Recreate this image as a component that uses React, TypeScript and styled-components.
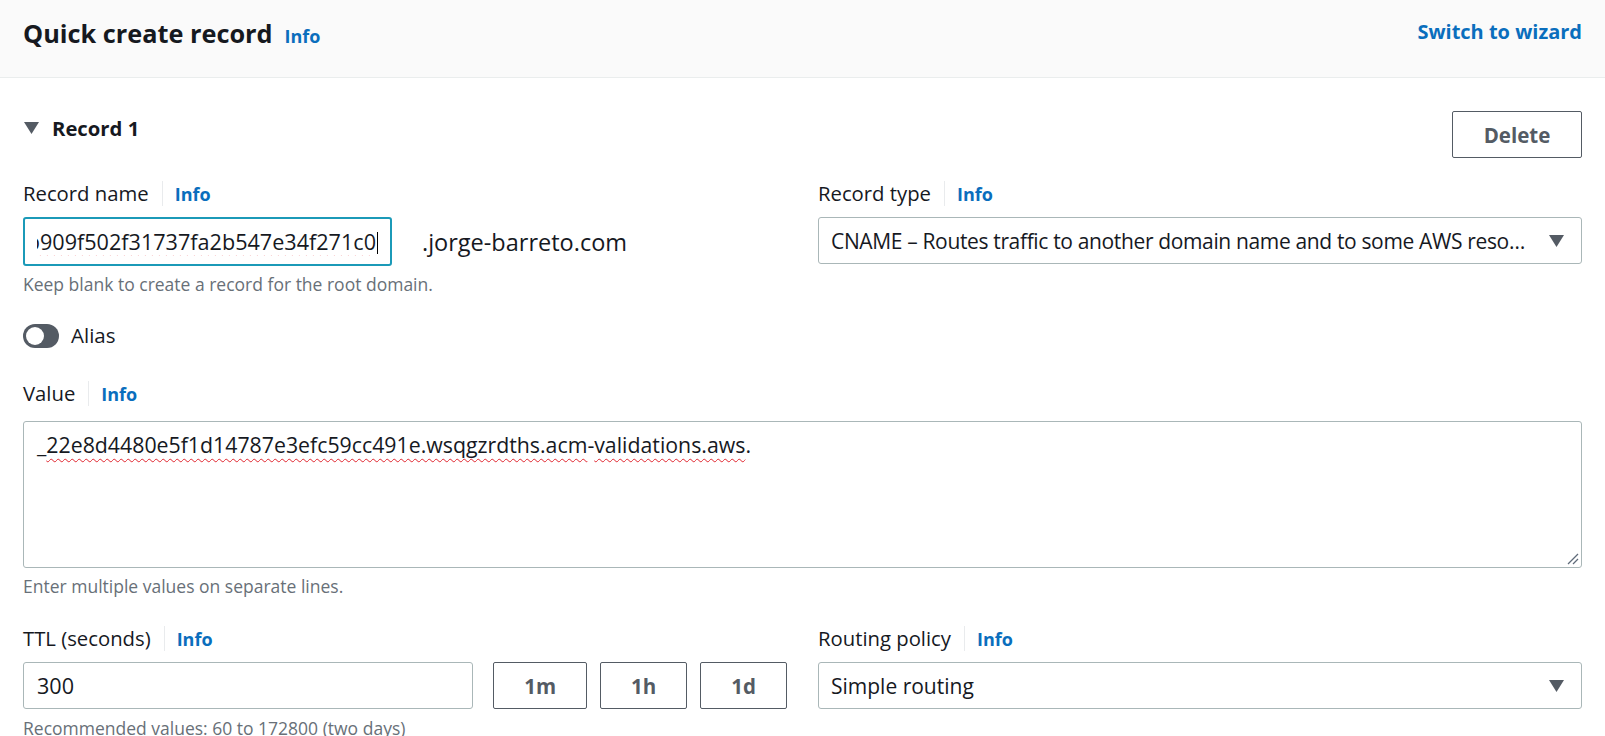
import React from "react";
import styled, { createGlobalStyle } from "styled-components";

const GlobalStyle = createGlobalStyle`
  html, body {
    margin: 0;
    padding: 0;
    overflow: hidden;
    background: #ffffff;
  }
  body {
    font-family: "Open Sans", "Noto Sans", Arial, sans-serif;
    color: #16191f;
  }
  *, *::before, *::after {
    box-sizing: border-box;
  }
`;

const LINK = "#0a6ebd";
const TEXT = "#16191f";
const MUTED = "#687078";
const BORDER = "#aab7b8";
const DARK = "#545b64";

const Page = styled.div`
  width: 1605px;
  min-height: 736px;
  background: #ffffff;
`;

const Header = styled.header`
  display: flex;
  justify-content: space-between;
  align-items: flex-start;
  height: 78px;
  padding: 16px 23px 0 23px;
  background: #fafafa;
  border-bottom: 1px solid #eaeded;
`;

const TitleGroup = styled.div`
  display: flex;
  align-items: baseline;
  gap: 12px;
`;

const Title = styled.h2`
  margin: 0;
  font-size: 25.3px;
  font-weight: 700;
  line-height: 34px;
  color: ${TEXT};
`;

const InfoLink = styled.a`
  font-size: 18px;
  line-height: 24px;
  font-weight: 700;
  color: ${LINK};
  text-decoration: none;
  cursor: pointer;
`;

const HeaderLink = styled.a`
  margin-top: 2px;
  font-size: 20px;
  line-height: 28px;
  font-weight: 700;
  color: ${LINK};
  text-decoration: none;
  cursor: pointer;
`;

const Body = styled.main`
  padding: 33px 23px 40px 23px;
`;

const RecordHeader = styled.div`
  display: flex;
  justify-content: space-between;
  align-items: flex-start;
`;

const Expander = styled.div`
  display: flex;
  align-items: center;
  gap: 13px;
  margin-top: 4px;
  padding-left: 1px;
  font-size: 20.3px;
  line-height: 26px;
  font-weight: 700;
  color: ${TEXT};
`;

const OutlineButton = styled.button<{ $width?: number }>`
  flex: none;
  ${(p) => (p.$width ? `width: ${p.$width}px;` : "padding: 0 30px;")}
  height: 47px;
  border: 1px solid ${DARK};
  border-radius: 2px;
  background: #ffffff;
  color: ${DARK};
  font-family: inherit;
  font-size: 20.5px;
  font-weight: 700;
  cursor: pointer;
`;

const FieldGrid = styled.div<{ $top: number }>`
  display: grid;
  grid-template-columns: 1fr 1fr;
  column-gap: 31px;
  margin-top: ${(p) => p.$top}px;
`;

const Field = styled.div<{ $top?: number }>`
  display: flex;
  flex-direction: column;
  min-width: 0;
  margin-top: ${(p) => p.$top ?? 0}px;
`;

const LabelRow = styled.div`
  display: flex;
  align-items: center;
  height: 25px;
`;

const Label = styled.label`
  font-size: 20.3px;
  line-height: 25px;
  color: ${TEXT};
`;

const LabelDivider = styled.span`
  width: 1px;
  height: 25px;
  background: #e9ebed;
  margin: 0 12px 0 13px;
`;

const ControlRow = styled.div`
  display: flex;
  align-items: center;
  margin-top: 11px;
`;

const TextInput = styled.div<{ $focused?: boolean; $width?: number }>`
  display: flex;
  align-items: center;
  ${(p) => (p.$width ? `width: ${p.$width}px; flex: none;` : "flex: 1; min-width: 0;")}
  height: ${(p) => (p.$focused ? 49 : 47)}px;
  padding: 0 ${(p) => (p.$focused ? 12 : 13)}px;
  border: ${(p) => (p.$focused ? "2px solid #1b9ab8" : `1px solid ${BORDER}`)};
  border-radius: 3px;
  background: #ffffff;
  font-size: 21.6px;
  color: ${TEXT};
`;

const InputViewport = styled.div`
  flex: 1;
  min-width: 0;
  display: flex;
  justify-content: flex-end;
  overflow: hidden;
`;

const InputValue = styled.span`
  flex: none;
  white-space: nowrap;
  line-height: 28px;
`;

const TextCursor = styled.span`
  display: inline-block;
  width: 1px;
  height: 22px;
  margin-left: 1px;
  background: #000000;
  vertical-align: -4px;
`;

const Misspelled = styled.span`
  text-decoration: underline wavy #e0262f;
  text-decoration-thickness: 1px;
  text-underline-offset: 5px;
  text-decoration-skip-ink: none;
`;

const DomainSuffix = styled.span`
  margin-left: 30px;
  font-size: 23.5px;
  color: ${TEXT};
`;

const Helper = styled.div<{ $top?: number }>`
  margin-top: ${(p) => p.$top ?? 7}px;
  font-size: 17.5px;
  line-height: 22px;
  color: ${MUTED};
  white-space: nowrap;
`;

const SelectBox = styled.div`
  flex: 1;
  min-width: 0;
  display: flex;
  align-items: center;
  height: 47px;
  padding: 0 17px 0 12px;
  border: 1px solid ${BORDER};
  border-radius: 3px;
  background: #ffffff;
  font-size: 21px;
  color: ${TEXT};
`;

const SelectText = styled.span<{ $tight?: boolean }>`
  flex: 1;
  min-width: 0;
  margin-right: 20px;
  white-space: nowrap;
  overflow: hidden;
  text-overflow: ellipsis;
  letter-spacing: ${(p) => (p.$tight ? "-0.35px" : "normal")};
`;

const ToggleRow = styled.div`
  display: flex;
  align-items: center;
  gap: 12px;
  margin-top: 28px;
`;

const ToggleTrack = styled.span<{ $on?: boolean }>`
  position: relative;
  width: 36px;
  height: 24px;
  border-radius: 12px;
  background: ${(p) => (p.$on ? LINK : DARK)};

  &::after {
    content: "";
    position: absolute;
    top: 3px;
    left: ${(p) => (p.$on ? 15 : 3)}px;
    width: 18px;
    height: 18px;
    border-radius: 50%;
    background: #ffffff;
  }
`;

const ToggleLabel = styled.span`
  font-size: 20.5px;
  line-height: 25px;
  color: ${TEXT};
`;

const TextAreaBox = styled.div`
  position: relative;
  margin-top: 15px;
  height: 147px;
  padding: 9px 14px 0 13px;
  border: 1px solid ${BORDER};
  border-radius: 3px;
  background: #ffffff;
  font-size: 21.3px;
  line-height: 28px;
  color: ${TEXT};
  white-space: nowrap;
`;

const ResizeGrip = styled.svg`
  position: absolute;
  right: 2px;
  bottom: 2px;
`;

const ButtonGroup = styled.div`
  display: flex;
  gap: 13px;
  margin-left: 20px;
`;

const DownTriangle = ({ color = DARK }: { color?: string }) => (
  <svg width="15" height="12" viewBox="0 0 15 12" aria-hidden="true">
    <polygon points="0,0 15,0 7.5,12" fill={color} />
  </svg>
);

const FieldLabel = ({ children }: { children: React.ReactNode }) => (
  <LabelRow>
    <Label>{children}</Label>
    <LabelDivider />
    <InfoLink>Info</InfoLink>
  </LabelRow>
);

export default function App() {
  return (
    <>
      <GlobalStyle />
      <Page>
        <Header>
          <TitleGroup>
            <Title>Quick create record</Title>
            <InfoLink>Info</InfoLink>
          </TitleGroup>
          <HeaderLink>Switch to wizard</HeaderLink>
        </Header>

        <Body>
          <RecordHeader>
            <Expander>
              <DownTriangle />
              <span>Record 1</span>
            </Expander>
            <OutlineButton $width={130}>Delete</OutlineButton>
          </RecordHeader>

          <FieldGrid $top={23}>
            <Field>
              <FieldLabel>Record name</FieldLabel>
              <ControlRow>
                <TextInput $focused $width={369}>
                  <InputViewport>
                    <InputValue>
                      <Misspelled>_97b909f502f31737fa2b547e34f271c0</Misspelled>
                      <TextCursor />
                    </InputValue>
                  </InputViewport>
                </TextInput>
                <DomainSuffix>.jorge-barreto.com</DomainSuffix>
              </ControlRow>
              <Helper>Keep blank to create a record for the root domain.</Helper>
            </Field>
            <Field>
              <FieldLabel>Record type</FieldLabel>
              <ControlRow>
                <SelectBox>
                  <SelectText $tight>
                    CNAME – Routes traffic to another domain name and to some AWS reso…
                  </SelectText>
                  <DownTriangle />
                </SelectBox>
              </ControlRow>
            </Field>
          </FieldGrid>

          <ToggleRow>
            <ToggleTrack />
            <ToggleLabel>Alias</ToggleLabel>
          </ToggleRow>

          <Field $top={33}>
            <FieldLabel>Value</FieldLabel>
            <TextAreaBox>
              _<Misspelled>22e8d4480e5f1d14787e3efc59cc491e.wsqgzrdths.acm</Misspelled>-
              <Misspelled>validations.aws</Misspelled>.
              <ResizeGrip width="12" height="12" viewBox="0 0 12 12" aria-hidden="true">
                <line x1="11" y1="1" x2="1" y2="11" stroke="#5f6b7a" strokeWidth="1.3" />
                <line x1="11" y1="6" x2="6" y2="11" stroke="#5f6b7a" strokeWidth="1.3" />
              </ResizeGrip>
            </TextAreaBox>
            <Helper>Enter multiple values on separate lines.</Helper>
          </Field>

          <FieldGrid $top={29}>
            <Field>
              <FieldLabel>TTL (seconds)</FieldLabel>
              <ControlRow>
                <TextInput>
                  <InputValue>300</InputValue>
                </TextInput>
                <ButtonGroup>
                  <OutlineButton>1m</OutlineButton>
                  <OutlineButton>1h</OutlineButton>
                  <OutlineButton>1d</OutlineButton>
                </ButtonGroup>
              </ControlRow>
              <Helper $top={8}>Recommended values: 60 to 172800 (two days)</Helper>
            </Field>
            <Field>
              <FieldLabel>Routing policy</FieldLabel>
              <ControlRow>
                <SelectBox>
                  <SelectText>Simple routing</SelectText>
                  <DownTriangle />
                </SelectBox>
              </ControlRow>
            </Field>
          </FieldGrid>
        </Body>
      </Page>
    </>
  );
}
